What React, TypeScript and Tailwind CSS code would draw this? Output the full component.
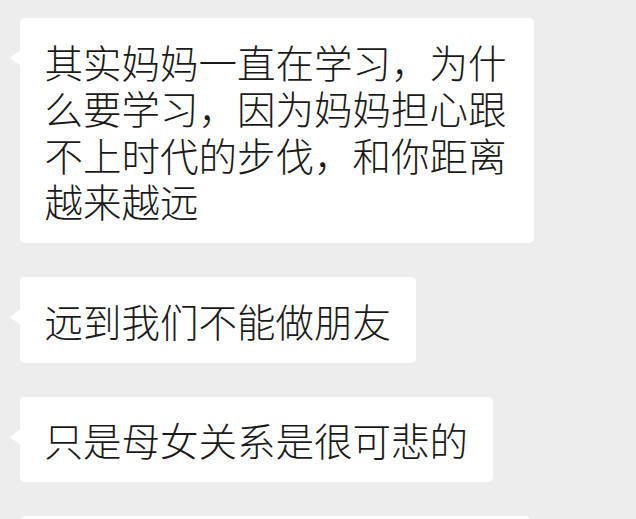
import React from "react";

function Bubble({ children, className = "" }: { children: React.ReactNode; className?: string }) {
  return (
    <div className={`relative w-fit max-w-[514px] rounded-[5px] bg-white pl-[24.5px] pr-[25px] py-[19.5px] ${className}`}>
      <svg
        className="absolute left-[-10px] top-[31px]"
        width="11"
        height="18"
        viewBox="0 0 11 18"
      >
        <path d="M11 1 L1.2 8 Q0 9 1.2 10 L11 17 Z" fill="#ffffff" />
      </svg>
      <div className="text-[38.5px] leading-[46.5px] font-light text-[#1a1a1a] break-all">{children}</div>
    </div>
  );
}

export default function App() {
  return (
    <div
      className="w-[636px] h-[519px] overflow-hidden bg-[#ededed] pl-[20px] pt-[18px] flex flex-col gap-[34px]"
      style={{ fontFamily: '"Noto Sans CJK SC", "Noto Sans", sans-serif' }}
    >
      <Bubble>其实妈妈一直在学习，为什么要学习，因为妈妈担心跟不上时代的步伐，和你距离越来越远</Bubble>
      <Bubble>远到我们不能做朋友</Bubble>
      <Bubble>只是母女关系是很可悲的</Bubble>
      <Bubble className="min-w-[510px]">&nbsp;</Bubble>
    </div>
  );
}
